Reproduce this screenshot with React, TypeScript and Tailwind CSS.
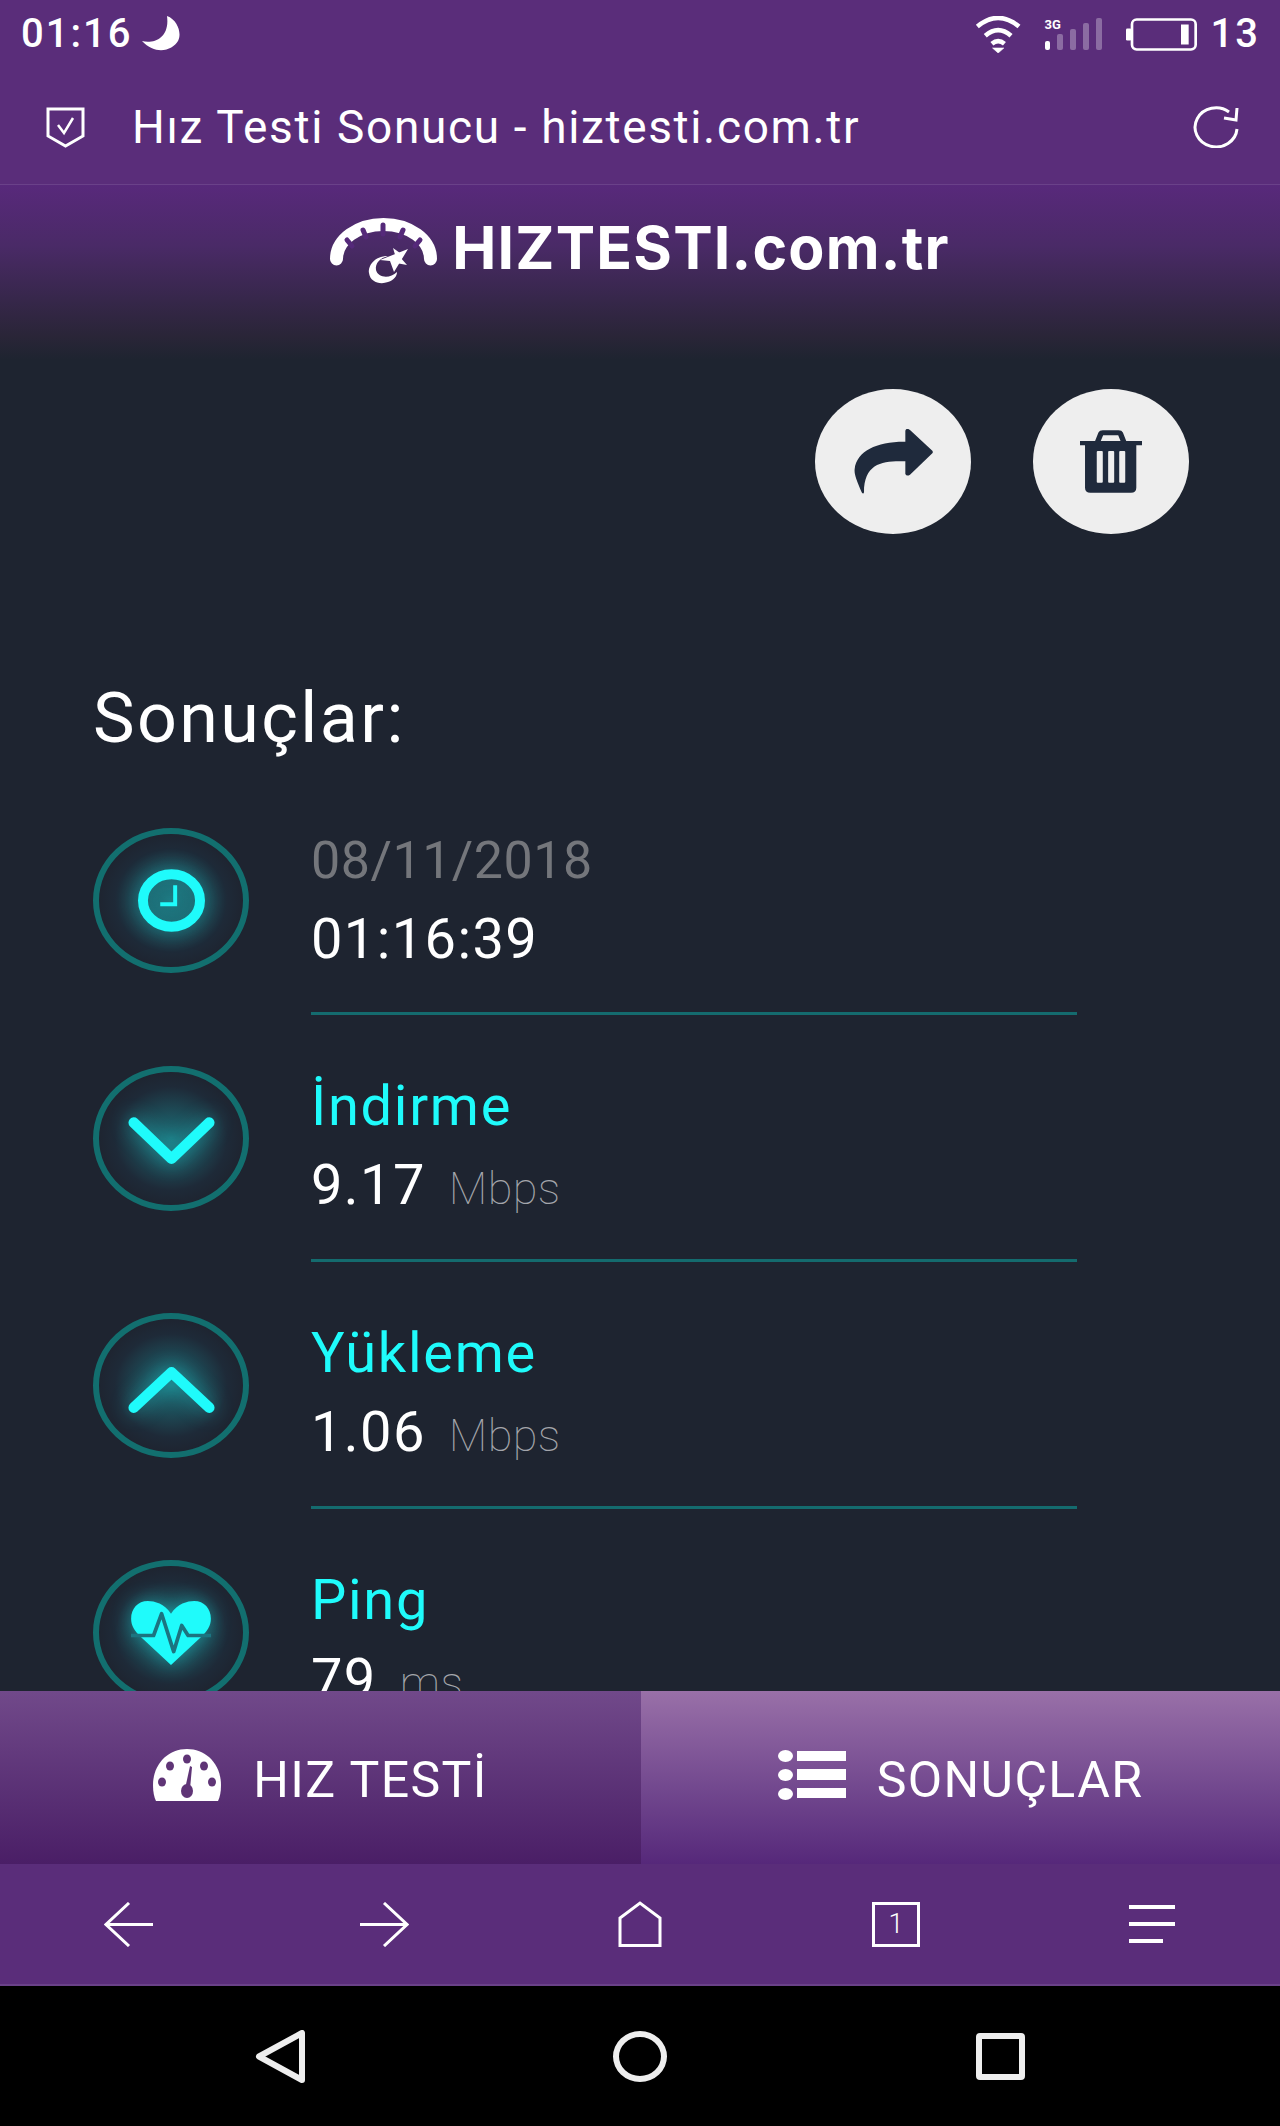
const rows = [
  { label: "İndirme", value: "9.17", unit: "Mbps", icon: "down" },
  { label: "Yükleme", value: "1.06", unit: "Mbps", icon: "up" },
  { label: "Ping", value: "79", unit: "ms", icon: "heart" },
];

function StatusBar() {
  return (
    <div className="flex h-[70px] shrink-0 items-center justify-between pb-[2px] pl-[21px] pr-[20px] text-[40px] font-medium leading-none tracking-[2px] text-white">
      <div className="flex items-center gap-[10px]">
        <span>01:16</span>
        <svg width="38" height="36" viewBox="0 0 38 36" fill="white">
          <path d="M25 0C36 4 40 18 36 25C31 34 14 40 0 25C12 28 28 22 25 0Z" />
        </svg>
      </div>
      <div className="flex items-center">
        <svg width="46" height="37" viewBox="48 40 137 112" fill="none" stroke="white" strokeWidth="14">
          <path d="M54 72Q117 20 180 72" />
          <path d="M78 100Q117 66 156 100" />
          <path d="M98 124Q117 108 136 124" />
          <path d="M100 137L117 152L134 137Z" fill="white" strokeWidth="2" />
        </svg>
        <div className="relative ml-[24px] flex h-[32px] w-[57px] items-end gap-[7px]">
          <span className="absolute left-0 top-0 text-[13px] font-bold leading-none tracking-normal">3G</span>
          <div className="h-[9px] w-[6px] rounded-[2px] bg-white" />
          <div className="h-[16px] w-[6px] rounded-[2px] bg-white/30" />
          <div className="h-[21px] w-[6px] rounded-[2px] bg-white/30" />
          <div className="h-[27px] w-[6px] rounded-[2px] bg-white/30" />
          <div className="h-[32px] w-[6px] rounded-[2px] bg-white/30" />
        </div>
        <svg className="ml-[24px]" width="71" height="33" viewBox="500 47 213 98">
          <rect x="518" y="51" width="191" height="90" rx="14" fill="none" stroke="white" strokeWidth="8" />
          <rect x="500" y="78" width="16" height="36" rx="4" fill="white" />
          <rect x="665" y="66" width="23" height="60" fill="white" />
        </svg>
        <span className="ml-[14px]">13</span>
      </div>
    </div>
  );
}

function BrowserBar() {
  return (
    <div className="flex h-[115px] shrink-0 items-center border-b border-[#6a4189] pl-[46px] pr-[41px] text-white">
      <svg width="39" height="42" viewBox="0 0 39 42" fill="none" stroke="white">
        <path d="M2 3H37V30L19.5 40L2 30Z" strokeWidth="3" />
        <path d="M12 19L18 27L27 12" strokeWidth="2.5" />
      </svg>
      <span className="ml-[47px] flex-1 text-[46px] leading-none tracking-[1.65px]">
        Hız Testi Sonucu - hiztesti.com.tr
      </span>
      <svg width="46" height="42" viewBox="0 0 46 42" fill="none" stroke="white" strokeWidth="3">
        <path d="M36 6A21 19.5 0 1 0 44 23" />
        <path d="M44 2L43 14L31 12" />
      </svg>
    </div>
  );
}

function Logo() {
  return (
    <div className="flex justify-center pt-[31px]">
      <div className="flex h-[64px] items-start gap-[12px]">
        <svg width="110" height="70" viewBox="0 0 110 70" fill="none">
          <path d="M6.5 43A47 34.5 0 0 1 100.5 43" stroke="white" strokeWidth="13" strokeLinecap="round" />
          <g stroke="#55297a" strokeWidth="5" strokeLinecap="round">
            <path d="M17 24L22 30" />
            <path d="M33 14L36 21" />
            <path d="M53 9V18" />
            <path d="M73 14L70 21" />
            <path d="M90 24L85 30" />
          </g>
          <path d="M58 40C44 40 38 50 39 57C40 66 50 69 58 66C64 64 67 60 67 56C60 63 48 62 46 54C45 47 50 42 58 40Z" fill="white" />
          <path d="M78 33L64 56L60 45L50 44Z" fill="white" />
          <path d="M63 32L70 37L66 42Z" fill="white" />
          <path d="M77 49L66 47L70 41Z" fill="white" />
        </svg>
        <span className="text-[59px] font-bold leading-[63px] tracking-[1.2px] text-white [font-family:Inter,sans-serif]">
          HIZTESTI.com.tr
        </span>
      </div>
    </div>
  );
}

function RoundButton({ children }: { children: React.ReactNode }) {
  return (
    <button className="flex h-[145px] w-[156px] items-center justify-center rounded-[50%] bg-[#eeeeee]">
      {children}
    </button>
  );
}

function RowIcon({ icon }: { icon: string }) {
  if (icon === "clock") {
    return (
      <svg className="drop-shadow-[0_0_10px_#1ffbfb66]" width="67" height="63" viewBox="203 180 202 188" fill="none" stroke="#1ffbfb">
        <ellipse cx="304" cy="274" rx="86" ry="79" strokeWidth="30" />
        <path d="M315 228V285H270" strokeWidth="12" />
      </svg>
    );
  }
  if (icon === "down") {
    return (
      <svg className="mt-[4px] drop-shadow-[0_0_10px_#1ffbfb66]" width="87" height="48" viewBox="173 920 260 145" fill="none" stroke="#1ffbfb" strokeWidth="32" strokeLinecap="round" strokeLinejoin="round">
        <path d="M189 937L303 1046L417 937" />
      </svg>
    );
  }
  if (icon === "up") {
    return (
      <svg className="mt-[8px] drop-shadow-[0_0_10px_#1ffbfb66]" width="87" height="48" viewBox="173 230 260 145" fill="none" stroke="#1ffbfb" strokeWidth="32" strokeLinecap="round" strokeLinejoin="round">
        <path d="M189 356L303 249L417 356" />
      </svg>
    );
  }
  return (
    <svg className="drop-shadow-[0_0_10px_#1ffbfb66]" width="80" height="64" viewBox="185 937 238 191">
      <path
        d="M304 975C285 945 255 937 235 937C205 937 185 960 185 990C185 1010 195 1028 215 1045L304 1128L393 1045C413 1028 423 1010 423 990C423 960 403 937 373 937C353 937 323 945 304 975Z"
        fill="#1ffbfb"
      />
      <path
        d="M180 1040H252L276 975L312 1088L336 1010L355 1040H428"
        fill="none"
        stroke="#1c7480"
        strokeWidth="11"
        strokeLinejoin="round"
      />
    </svg>
  );
}

function IconCircle({ icon }: { icon: string }) {
  return (
    <div className="flex h-[145px] w-[156px] shrink-0 items-center justify-center rounded-[50%] border-[6px] border-[#126f6f] bg-[radial-gradient(ellipse_at_center,#1d7079_0%,#1e2a38_55%,#1e2430_72%)]">
      <RowIcon icon={icon} />
    </div>
  );
}

function Results() {
  return (
    <div className="pl-[93px]">
      <h2 className="mt-[144px] text-[70px] leading-[80px] tracking-[2.4px] text-white">Sonuçlar:</h2>
      <div className="mt-[70px] flex flex-col gap-[51px]">
        <div className="flex gap-[62px]">
          <IconCircle icon="clock" />
          <div className="h-[187px] w-[766px] border-b-[3px] border-[#146b6e]">
            <div className="-mt-[7px] text-[52px] leading-[79px] tracking-[0.5px] text-[#74767b]">08/11/2018</div>
            <div className="text-[56px] leading-[79px] tracking-[1.4px] text-white">01:16:39</div>
          </div>
        </div>
        {rows.map((row, i) => (
          <div key={row.label} className="flex gap-[62px]">
            <IconCircle icon={row.icon} />
            <div className={i === rows.length - 1 ? "w-[766px]" : "h-[196px] w-[766px] border-b-[3px] border-[#146b6e]"}>
              <div className="pt-[1px] text-[56px] leading-[79px] tracking-[1.7px] text-[#1ffbfb]">{row.label}</div>
              <div className="flex items-baseline text-[56px] leading-[79px] text-white">
                <span className="tracking-[1.4px]">{row.value}</span>
                <span className="ml-[23px] text-[45px] font-thin tracking-[0.4px] text-[#a4a6ab]">{row.unit}</span>
              </div>
            </div>
          </div>
        ))}
      </div>
    </div>
  );
}

function BottomTabs() {
  return (
    <div className="grid h-[173px] shrink-0 grid-cols-[641px_639px] text-[50px] tracking-[1.4px] text-white">
      <div className="flex items-center justify-center gap-[32px] bg-gradient-to-b from-[#71498a] to-[#4a1e66]">
        <svg className="mb-[6px]" width="68" height="52" viewBox="0 0 68 52">
          <path d="M3 52Q0 46 0 36C0 15 15 0 34 0C53 0 68 15 68 36Q68 46 65 52Z" fill="white" />
          <g fill="#5f3476">
            <ellipse cx="34" cy="10" rx="4" ry="4.5" />
            <ellipse cx="17" cy="17" rx="4" ry="4.5" />
            <ellipse cx="51" cy="17" rx="4" ry="4.5" />
            <ellipse cx="9" cy="33" rx="4" ry="4.5" />
            <ellipse cx="59" cy="33" rx="4" ry="4.5" />
            <ellipse cx="34" cy="42" rx="6" ry="7" />
            <path d="M37 17L39 18L37 40H32Z" />
          </g>
        </svg>
        <span className="mt-[6px]">HIZ TESTİ</span>
      </div>
      <div className="flex items-center justify-center gap-[31px] bg-gradient-to-b from-[#9970a8] to-[#56287a]">
        <svg className="mb-[6px]" width="68" height="50" viewBox="0 0 68 50" fill="white">
          <ellipse cx="7.5" cy="6" rx="7.5" ry="6" />
          <ellipse cx="7.5" cy="25" rx="7.5" ry="6" />
          <ellipse cx="7.5" cy="44" rx="7.5" ry="6" />
          <rect x="19" y="1" width="49" height="10" />
          <rect x="19" y="19" width="49" height="11" />
          <rect x="19" y="38" width="49" height="10" />
        </svg>
        <span className="mt-[6px]">SONUÇLAR</span>
      </div>
    </div>
  );
}

function BrowserNav() {
  return (
    <div className="grid h-[122px] shrink-0 grid-cols-5 place-items-center border-b-2 border-[#6a4189] bg-[#5a2d7a] text-white">
      <svg width="49" height="45" viewBox="0 0 49 45" fill="none" stroke="white" strokeWidth="3">
        <path d="M49 22.5H2M25 1L2 22.5L25 44" />
      </svg>
      <svg width="49" height="45" viewBox="0 0 49 45" fill="none" stroke="white" strokeWidth="3">
        <path d="M0 22.5H47M24 1L47 22.5L24 44" />
      </svg>
      <svg width="44" height="46" viewBox="0 0 44 46" fill="none" stroke="white" strokeWidth="3">
        <path d="M2 44.5V17L22 2L42 17V44.5Z" />
      </svg>
      <div className="flex h-[45px] w-[48px] items-center justify-center border-[3px] border-white text-[27px] font-light leading-none">
        1
      </div>
      <div className="flex flex-col gap-[13px]">
        <div className="h-[4px] w-[46px] bg-white" />
        <div className="h-[4px] w-[46px] bg-white" />
        <div className="h-[4px] w-[34px] bg-white" />
      </div>
    </div>
  );
}

function AndroidNav() {
  return (
    <div className="grid h-[140px] shrink-0 grid-cols-3 place-items-center bg-black px-[100px]">
      <svg width="50" height="53" viewBox="0 0 50 53" fill="none" stroke="#eeeeee" strokeWidth="6" strokeLinejoin="round">
        <path d="M47 3V50L4 26.5Z" />
      </svg>
      <div className="h-[51px] w-[54px] rounded-[50%] border-[6px] border-[#eeeeee]" />
      <div className="h-[47px] w-[49px] rounded-[4px] border-[6px] border-[#eeeeee]" />
    </div>
  );
}

export default function App() {
  return (
    <div className="flex h-[2126px] w-[1280px] flex-col overflow-hidden bg-[#5a2d7a] [font-family:Roboto,sans-serif]">
      <StatusBar />
      <BrowserBar />
      <main className="min-h-0 flex-1 overflow-hidden bg-[linear-gradient(to_bottom,#58297b_0px,#4a2a67_60px,#2a2538_150px,#1e2430_175px)]">
        <Logo />
        <div className="flex justify-end gap-[62px] pr-[91px] pt-[109px]">
          <RoundButton>
            <svg width="79" height="65" viewBox="220 175 237 195" fill="#1f2a3c">
              <path d="M374 180Q378 170 388 178L455 240Q458 244 455 248L388 312Q378 318 374 310V272C310 270 250 275 250 365Q248 372 243 365C228 330 220 310 222 295C228 240 290 212 374 213Z" />
            </svg>
          </RoundButton>
          <RoundButton>
            <svg width="62" height="63" viewBox="900 183 185 187">
              <path fillRule="evenodd" fill="#1f2a3c" d="M900 215H945L955 190Q958 183 968 183H1015Q1025 183 1028 190L1038 215H1085V228H1068V355Q1068 370 1052 370H931Q915 370 915 355V228H900ZM962 215H1021L1014 198H969Z" />
              <rect x="950" y="245" width="18" height="95" rx="3" fill="#eeeeee" />
              <rect x="984" y="245" width="18" height="95" rx="3" fill="#eeeeee" />
              <rect x="1017" y="245" width="18" height="95" rx="3" fill="#eeeeee" />
            </svg>
          </RoundButton>
        </div>
        <Results />
      </main>
      <BottomTabs />
      <BrowserNav />
      <AndroidNav />
    </div>
  );
}
